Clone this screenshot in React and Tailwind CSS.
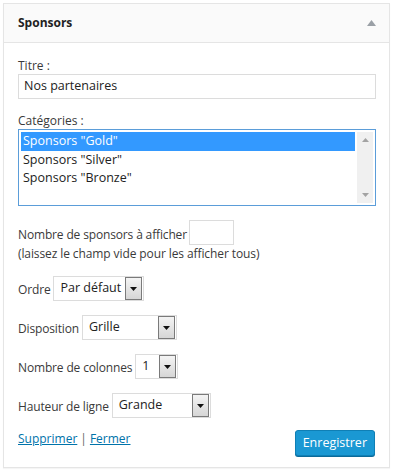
import React from "react";

const Arrow = () => (
  <span className="flex h-[23px] w-[17px] items-center justify-center border border-[#7a7a7a] bg-gradient-to-b from-[#f4f4f4] to-[#d6d6d6]">
    <svg width="7" height="4" viewBox="0 0 7 4">
      <path d="M0 0h7L3.5 4z" fill="#111" />
    </svg>
  </span>
);

const Select = ({ value, width }) => (
  <div
    className="flex h-[25px] shrink-0 items-center justify-between whitespace-nowrap border border-[#dcdcdc] bg-white pl-[6px] pr-px text-[12.5px] text-[#222]"
    style={{ width }}
  >
    <span>{value}</span>
    <Arrow />
  </div>
);

const Row = ({ label, children }) => (
  <div className="flex items-center gap-[3px]">
    <span className="pt-[2px] tracking-[-0.15px]">{label}</span>
    {children}
  </div>
);

export default function App() {
  return (
    <div
      className="h-[472px] w-[393px] bg-white p-[3px] text-[12px] text-[#3a3a3a]"
      style={{ fontFamily: '"Open Sans", "Noto Sans", sans-serif' }}
    >
      <div className="h-[465px] w-[387px] border border-[#e5e5e5] shadow-[0_1px_1px_rgba(0,0,0,0.04)]">
        {/* header */}
        <div className="flex h-[39px] items-center justify-between border-b border-[#e5e5e5] bg-[#fafafa] pl-[14px] pr-[13px]">
          <span className="text-[12px] font-bold text-[#222]">Sponsors</span>
          <svg width="9" height="6" viewBox="0 0 9 6">
            <path d="M4.5 0L9 6H0z" fill="#9aa0a6" />
          </svg>
        </div>

        <div className="flex flex-col px-[14px] pt-[14px]">
          <label className="leading-[17px]">Titre :</label>
          <div className="flex h-[25px] w-[358px] items-center border border-[#dcdcdc] px-[5px] text-[12.5px] text-[#222]">
            Nos partenaires
          </div>

          <label className="mt-[13px] leading-[17px]">Catégories :</label>
          <div className="flex h-[77px] w-[358px] border border-[#5b9dd9] p-[2px] text-[12.5px] text-[#222]">
            <div className="flex flex-1 flex-col">
              <div className="h-[18.5px] bg-[#3399ff] pl-[2px] leading-[18px] text-white">Sponsors "Gold"</div>
              <div className="h-[18.5px] pl-[2px] leading-[18px]">Sponsors "Silver"</div>
              <div className="h-[18.5px] pl-[2px] leading-[18px]">Sponsors "Bronze"</div>
            </div>
            <div className="ml-[2px] flex w-[16px] flex-col items-center justify-between bg-[#f0f0f0] py-[6px]">
              <svg width="7" height="4" viewBox="0 0 7 4">
                <path d="M3.5 0L7 4H0z" fill="#a3a3a3" />
              </svg>
              <svg width="7" height="4" viewBox="0 0 7 4">
                <path d="M0 0h7L3.5 4z" fill="#a3a3a3" />
              </svg>
            </div>
          </div>

          <div className="mt-[14px] flex items-center gap-[2px]">
            <span className="pt-[4px] tracking-[-0.15px]">Nombre de sponsors à afficher</span>
            <div className="h-[25px] w-[45px] border border-[#dcdcdc]" />
          </div>
          <span className="leading-[17px] tracking-[-0.1px]">(laissez le champ vide pour les afficher tous)</span>

          <div className="mt-[14px] flex flex-col gap-[14px]">
            <Row label="Ordre">
              <Select value="Par défaut" width={91} />
            </Row>
            <Row label="Disposition">
              <Select value="Grille" width={95} />
            </Row>
            <Row label="Nombre de colonnes">
              <Select value="1" width={43} />
            </Row>
            <Row label="Hauteur de ligne">
              <Select value="Grande" width={99} />
            </Row>
          </div>

          <div className="mt-[12px] flex items-start justify-between">
            <div className="flex items-center gap-[3px] leading-[17px] text-[#0073aa]">
              <a className="underline">Supprimer </a>
              <span className="text-[#666]">|</span>
              <a className="underline">Fermer</a>
            </div>
            <button className="h-[26px] rounded-[3px] border border-[#0f7fb5] bg-[#1a98d3] px-[7px] text-[12.5px] text-white shadow-[0_1px_0_#0b6a99]">
              Enregistrer
            </button>
          </div>
        </div>
      </div>
    </div>
  );
}
